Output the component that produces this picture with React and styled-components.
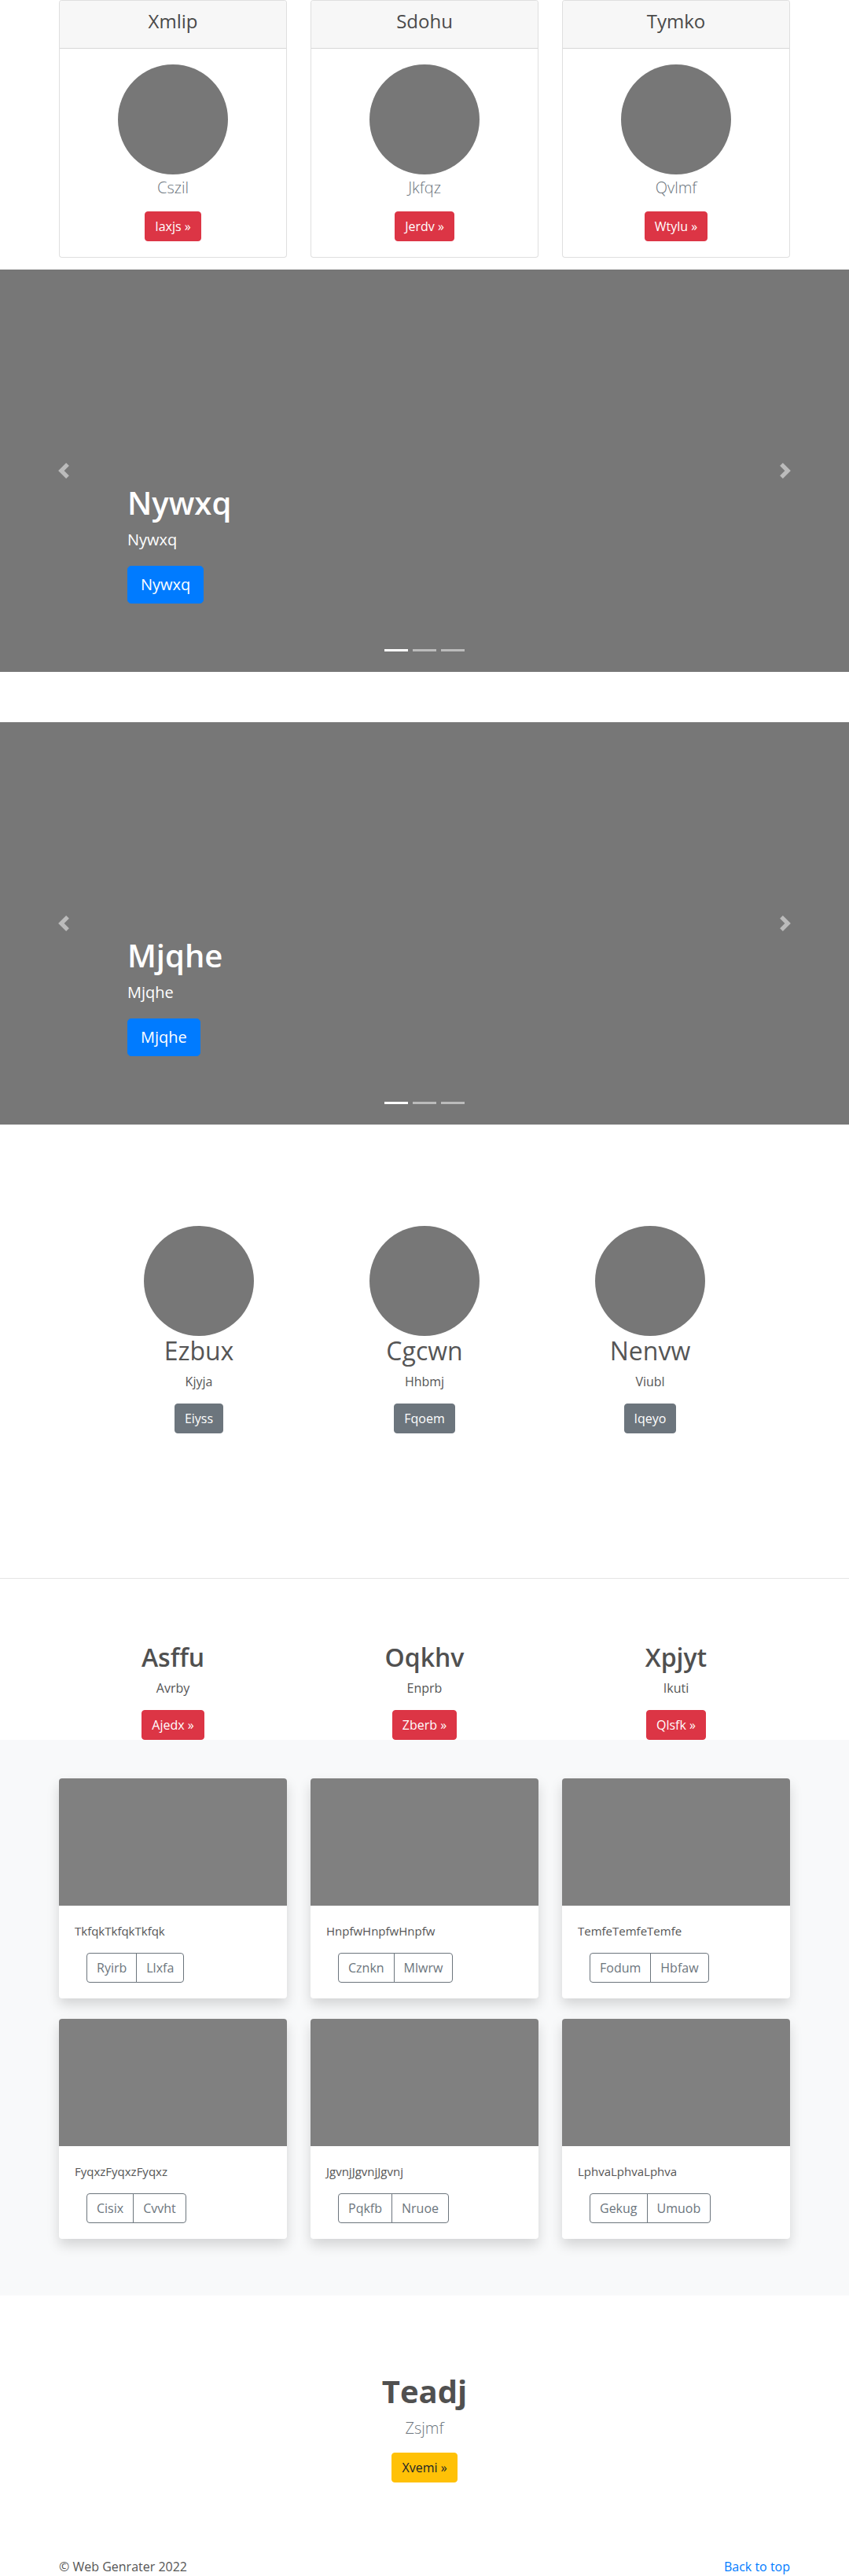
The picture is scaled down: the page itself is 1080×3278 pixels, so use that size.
import React from "react";
import styled, { createGlobalStyle } from "styled-components";

const GlobalStyle = createGlobalStyle`
  html, body {
    margin: 0;
    padding: 0;
  }
  body {
    font-family: "Open Sans", "Noto Sans", sans-serif;
    font-size: 16px;
    line-height: 1.5;
    color: #555;
    background: #fff;
  }
  h1, h2, h3, h4, h5, p {
    margin: 0;
  }
  * {
    box-sizing: border-box;
  }
`;

const Page = styled.div`
  width: 100%;
`;

const Container = styled.div`
  width: ${(p) => p.$width || 930}px;
  margin: 0 auto;
`;

const Grid = styled.div`
  display: grid;
  grid-template-columns: repeat(3, 1fr);
  column-gap: ${(p) => p.$gap ?? 30}px;
  row-gap: ${(p) => p.$rowGap ?? 0}px;
`;

const Button = styled.a`
  display: inline-block;
  padding: ${(p) => (p.$large ? "8px 16px" : "6px 12px")};
  font-size: ${(p) => (p.$large ? 20 : 16)}px;
  line-height: ${(p) => (p.$large ? 30 : 24)}px;
  border-radius: ${(p) => (p.$large ? 4.8 : 4)}px;
  border: 1px solid ${(p) => p.$bg};
  background: ${(p) => p.$bg};
  color: ${(p) => p.$color || "#fff"};
  text-decoration: none;
  white-space: nowrap;
  cursor: pointer;
`;

/* ---------- top profile cards ---------- */

const TopSection = styled.section`
  margin-bottom: 15px;
`;

const ProfileCard = styled.div`
  border: 1px solid rgba(0, 0, 0, 0.125);
  border-radius: 4px;
  background: #fff;
  overflow: hidden;
`;

const CardHeader = styled.div`
  background: #f7f7f7;
  border-bottom: 1px solid rgba(0, 0, 0, 0.125);
  padding: 12px 20px;
  text-align: center;
`;

const HeaderTitle = styled.h4`
  font-size: 24px;
  font-weight: 400;
  line-height: 28px;
  margin-bottom: 8px;
  color: #4a4a4a;
`;

const CardBody = styled.div`
  padding: 20px;
  display: flex;
  flex-direction: column;
  align-items: center;
`;

const Avatar = styled.div`
  width: 140px;
  height: 140px;
  border-radius: 50%;
  background: #777;
  flex-shrink: 0;
`;

const Lead = styled.p`
  font-size: 20px;
  font-weight: 300;
  line-height: 30px;
  color: #6c757d;
  margin-top: ${(p) => p.$top || 0}px;
  margin-bottom: ${(p) => p.$bottom ?? 16}px;
`;

/* ---------- carousel ---------- */

const Slide = styled.div`
  position: relative;
  height: 512px;
  background: #777;
  margin-bottom: 64px;
  display: flex;
  flex-direction: column;
  justify-content: flex-end;
  align-items: flex-start;
  padding: 0 15% 87px;
  color: #fff;
`;

const SlideTitle = styled.h1`
  font-size: 40px;
  font-weight: 600;
  line-height: 48px;
  margin-bottom: 8px;
`;

const SlideText = styled.p`
  font-size: 20px;
  line-height: 30px;
  margin-bottom: 18px;
`;

const Control = styled.a`
  position: absolute;
  top: 0;
  bottom: 0;
  ${(p) => (p.$side === "left" ? "left: 0;" : "right: 0;")}
  width: 15%;
  display: flex;
  align-items: center;
  justify-content: center;
  opacity: 0.5;
`;

const Indicators = styled.ol`
  position: absolute;
  left: 0;
  right: 0;
  bottom: 26px;
  margin: 0;
  padding: 0;
  list-style: none;
  display: flex;
  justify-content: center;
  gap: 6px;
`;

const Dot = styled.li`
  width: 30px;
  height: 3px;
  background: #fff;
  opacity: ${(p) => (p.$active ? 1 : 0.5)};
`;

const Chevron = ({ dir }) => (
  <svg width="20" height="20" viewBox="0 0 8 8" fill="#fff">
    {dir === "left" ? (
      <path d="M5.25 0l-4 4 4 4 1.5-1.5L4.25 4l2.5-2.5L5.25 0z" />
    ) : (
      <path d="M2.75 0l-1.5 1.5L3.75 4l-2.5 2.5L2.75 8l4-4-4-4z" />
    )}
  </svg>
);

const Carousel = ({ label }) => (
  <Slide>
    <Control $side="left">
      <Chevron dir="left" />
    </Control>
    <SlideTitle>{label}</SlideTitle>
    <SlideText>{label}</SlideText>
    <Button $large $bg="#007bff">
      {label}
    </Button>
    <Control $side="right">
      <Chevron dir="right" />
    </Control>
    <Indicators>
      <Dot $active />
      <Dot />
      <Dot />
    </Indicators>
  </Slide>
);

/* ---------- team ---------- */

const TeamSection = styled.section`
  padding: 65px 0 184px;
  border-bottom: 1px solid #e5e5e5;
`;

const Column = styled.div`
  display: flex;
  flex-direction: column;
  align-items: center;
  text-align: center;
`;

const Heading2 = styled.h2`
  font-size: 32px;
  font-weight: ${(p) => p.$weight || 400};
  line-height: 38px;
  margin-bottom: 8px;
  color: ${(p) => p.$color || "#555"};
`;

const Text = styled.p`
  font-size: 16px;
  line-height: 24px;
  margin-bottom: 16px;
  color: #555;
`;

/* ---------- features ---------- */

const FeatureSection = styled.section`
  padding-top: 81px;
`;

/* ---------- album ---------- */

const AlbumSection = styled.section`
  background: #f8f9fa;
  padding: 49px 0 72px;
`;

const AlbumCard = styled.div`
  background: #fff;
  border-radius: 4px;
  overflow: hidden;
  box-shadow: 0 8px 16px rgba(0, 0, 0, 0.15);
`;

const Thumb = styled.div`
  height: 162px;
  background: #808080;
`;

const AlbumBody = styled.div`
  padding: 20px;
`;

const AlbumText = styled.p`
  font-size: 15px;
  line-height: 24px;
  margin-bottom: 16px;
  color: #555;
`;

const BtnGroup = styled.div`
  display: inline-flex;
  margin-left: 15px;
`;

const OutlineBtn = styled.a`
  display: block;
  padding: 6px 12px;
  font-size: 16px;
  line-height: 24px;
  color: #6c757d;
  border: 1px solid #6c757d;
  background: transparent;
  &:first-child {
    border-radius: 4px 0 0 4px;
  }
  &:last-child {
    border-radius: 0 4px 4px 0;
    margin-left: -1px;
  }
`;

/* ---------- hero + footer ---------- */

const HeroSection = styled.section`
  padding: 98px 0 95px;
`;

const HeroTitle = styled.h1`
  font-size: 40px;
  font-weight: 700;
  line-height: 48px;
  margin-bottom: 8px;
  color: #505050;
`;

const Footer = styled.footer`
  display: flex;
  justify-content: space-between;
  font-size: 16px;
  line-height: 24px;
  color: #555;
`;

const TopLink = styled.a`
  color: #007bff;
  text-decoration: none;
`;

const profiles = [
  { title: "Xmlip", sub: "Cszil", btn: "Iaxjs" },
  { title: "Sdohu", sub: "Jkfqz", btn: "Jerdv" },
  { title: "Tymko", sub: "Qvlmf", btn: "Wtylu" },
];

const team = [
  { name: "Ezbux", sub: "Kjyja", btn: "Eiyss" },
  { name: "Cgcwn", sub: "Hhbmj", btn: "Fqoem" },
  { name: "Nenvw", sub: "Viubl", btn: "Iqeyo" },
];

const features = [
  { name: "Asffu", sub: "Avrby", btn: "Ajedx" },
  { name: "Oqkhv", sub: "Enprb", btn: "Zberb" },
  { name: "Xpjyt", sub: "Ikuti", btn: "Qlsfk" },
];

const album = [
  { text: "Tkfqk", btns: ["Ryirb", "Llxfa"] },
  { text: "Hnpfw", btns: ["Cznkn", "Mlwrw"] },
  { text: "Temfe", btns: ["Fodum", "Hbfaw"] },
  { text: "Fyqxz", btns: ["Cisix", "Cvvht"] },
  { text: "Jgvnj", btns: ["Pqkfb", "Nruoe"] },
  { text: "Lphva", btns: ["Gekug", "Umuob"] },
];

const App = () => {
  return (
    <Page>
      <GlobalStyle />

      <TopSection>
        <Container>
          <Grid>
            {profiles.map((p) => (
              <ProfileCard key={p.title}>
                <CardHeader>
                  <HeaderTitle>{p.title}</HeaderTitle>
                </CardHeader>
                <CardBody>
                  <Avatar />
                  <Lead $top={2} $bottom={15}>
                    {p.sub}
                  </Lead>
                  <Button $bg="#dc3545">{p.btn} &raquo;</Button>
                </CardBody>
              </ProfileCard>
            ))}
          </Grid>
        </Container>
      </TopSection>

      <Carousel label="Nywxq" />
      <Carousel label="Mjqhe" />

      <TeamSection>
        <Container $width={861}>
          <Grid $gap={0}>
            {team.map((t) => (
              <Column key={t.name}>
                <Avatar />
                <Heading2>{t.name}</Heading2>
                <Text>{t.sub}</Text>
                <Button $bg="#6c757d">{t.btn}</Button>
              </Column>
            ))}
          </Grid>
        </Container>
      </TeamSection>

      <FeatureSection>
        <Container $width={960}>
          <Grid $gap={0}>
            {features.map((f) => (
              <Column key={f.name}>
                <Heading2 $weight={600} $color="#505050">
                  {f.name}
                </Heading2>
                <Text>{f.sub}</Text>
                <Button $bg="#dc3545">{f.btn} &raquo;</Button>
              </Column>
            ))}
          </Grid>
        </Container>
      </FeatureSection>

      <AlbumSection>
        <Container>
          <Grid $rowGap={26}>
            {album.map((a) => (
              <AlbumCard key={a.text}>
                <Thumb />
                <AlbumBody>
                  <AlbumText>{a.text + a.text + a.text}</AlbumText>
                  <BtnGroup>
                    {a.btns.map((b) => (
                      <OutlineBtn key={b}>{b}</OutlineBtn>
                    ))}
                  </BtnGroup>
                </AlbumBody>
              </AlbumCard>
            ))}
          </Grid>
        </Container>
      </AlbumSection>

      <HeroSection>
        <Column>
          <HeroTitle>Teadj</HeroTitle>
          <Lead>Zsjmf</Lead>
          <Button $bg="#ffc107" $color="#212529">
            Xvemi &raquo;
          </Button>
        </Column>
      </HeroSection>

      <Container>
        <Footer>
          <span>&copy; Web Genrater 2022</span>
          <TopLink href="#">Back to top</TopLink>
        </Footer>
      </Container>
    </Page>
  );
};

export default App;
